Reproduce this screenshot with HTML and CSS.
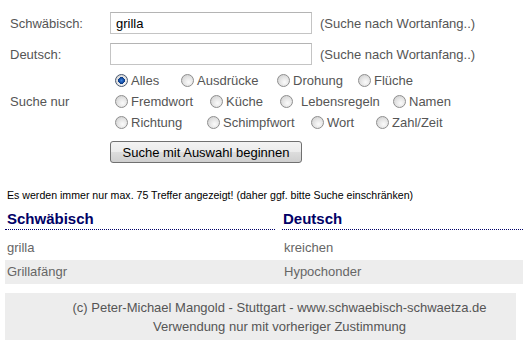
FILE: index.html
```html
<!DOCTYPE html>
<html lang="de">
<head>
<meta charset="utf-8">
<title>Schwäbisch-Wörterbuch</title>
<link rel="stylesheet" href="styles.css">
</head>
<body>
<div class="page">
  <form class="search">
    <label class="lbl row-s">Schwäbisch:</label>
    <div class="field row-s"><input class="txt" type="text" value="grilla"><span class="hint">(Suche nach Wortanfang..)</span></div>

    <label class="lbl row-d">Deutsch:</label>
    <div class="field row-d"><input class="txt" type="text" value=""><span class="hint">(Suche nach Wortanfang..)</span></div>

    <div class="lbl row-r">Suche nur</div>
    <div class="radios row-r">
      <div class="rrow r1">
        <label class="opt"><input class="rb" type="radio" name="k" checked><span>Alles</span></label>
        <label class="opt"><input class="rb" type="radio" name="k"><span>Ausdrücke</span></label>
        <label class="opt"><input class="rb" type="radio" name="k"><span>Drohung</span></label>
        <label class="opt"><input class="rb" type="radio" name="k"><span>Flüche</span></label>
      </div>
      <div class="rrow r2">
        <label class="opt"><input class="rb" type="radio" name="k"><span>Fremdwort</span></label>
        <label class="opt"><input class="rb" type="radio" name="k"><span>Küche</span></label>
        <label class="opt"><input class="rb" type="radio" name="k"><span class="sp">Lebensregeln</span></label>
        <label class="opt"><input class="rb" type="radio" name="k"><span>Namen</span></label>
      </div>
      <div class="rrow r3">
        <label class="opt"><input class="rb" type="radio" name="k"><span>Richtung</span></label>
        <label class="opt"><input class="rb" type="radio" name="k"><span>Schimpfwort</span></label>
        <label class="opt"><input class="rb" type="radio" name="k"><span>Wort</span></label>
        <label class="opt"><input class="rb" type="radio" name="k"><span>Zahl/Zeit</span></label>
      </div>
    </div>

    <div class="field row-b"><button class="btn" type="button">Suche mit Auswahl beginnen</button></div>
  </form>

  <p class="notice">Es werden immer nur max. 75 Treffer angezeigt! (daher ggf. bitte Suche einschränken)</p>

  <div class="results">
    <div class="th th-left">Schwäbisch</div>
    <div class="th">Deutsch</div>
    <div class="td">grilla</div>
    <div class="td">kreichen</div>
    <div class="td alt">Grillafängr</div>
    <div class="td alt">Hypochonder</div>
  </div>

  <div class="footer">
    <div>(c) Peter-Michael Mangold - Stuttgart - www.schwaebisch-schwaetza.de</div>
    <div>Verwendung nur mit vorheriger Zustimmung</div>
  </div>
</div>
</body>
</html>
```
FILE: styles.css
```css
html, body {
  margin: 0;
  padding: 0;
  background: #fff;
}
body {
  font-family: "Liberation Sans", Arial, sans-serif;
  font-size: 13px;
  color: #555;
}
.page {
  padding: 0 0 0 5px;
}

/* search form */
.search {
  display: grid;
  grid-template-columns: 100px auto;
  padding: 12px 0 0 5px;
  margin: 0;
}
.lbl {
  grid-column: 1;
  display: flex;
  align-items: center;
  color: #555;
}
.field {
  grid-column: 2;
  display: flex;
  align-items: center;
}
.row-s { height: 22px; }
.row-d { height: 22px; margin-top: 9px; }
.row-r { margin-top: 5px; }
.row-b { margin-top: 8px; }
.radios { grid-column: 2; padding-left: 5px; }

.txt {
  box-sizing: border-box;
  width: 202px;
  height: 22px;
  border: 1px solid #c4c4c4;
  border-top-color: #b4b4b4;
  padding: 0 5px;
  margin: 0;
  font-family: "Liberation Sans", Arial, sans-serif;
  font-size: 13px;
  color: #000;
  outline: none;
}
.hint {
  margin-left: 8px;
  color: #555;
}

.rrow {
  display: flex;
  height: 21px;
  align-items: center;
}
.opt {
  display: flex;
  align-items: center;
  color: #555;
}
.rb {
  appearance: none;
  -webkit-appearance: none;
  box-sizing: border-box;
  width: 13px;
  height: 13px;
  margin: 0 3px 0 0;
  border-radius: 50%;
  border: 1px solid #8e8e8e;
  background: radial-gradient(circle at 60% 65%, #fbfbfb 0, #e6e6e6 45%, #c9c9c9 100%);
  flex: none;
}
.rb:checked {
  border-color: #4a5a72;
  background:
    radial-gradient(circle at 50% 50%, #3f86e0 0, #1650a8 2.2px, #0c3a80 3.2px, transparent 3.6px),
    radial-gradient(circle at 60% 65%, #fbfbfb 0, #e6e6e6 45%, #c9c9c9 100%);
}
.sp { padding-left: 5px; }

.r1 .opt:nth-child(1) { width: 66px; }
.r1 .opt:nth-child(2) { width: 96px; }
.r1 .opt:nth-child(3) { width: 81px; }
.r2 .opt:nth-child(1) { width: 95px; }
.r2 .opt:nth-child(2) { width: 70px; }
.r2 .opt:nth-child(3) { width: 113px; }
.r3 .opt:nth-child(1) { width: 92px; }
.r3 .opt:nth-child(2) { width: 104px; }
.r3 .opt:nth-child(3) { width: 65px; }

.btn {
  box-sizing: border-box;
  width: 192px;
  height: 22px;
  margin: 0;
  padding: 0;
  border: 1px solid #707070;
  border-radius: 3px;
  background: linear-gradient(#f3f3f3 0, #ebebeb 50%, #dddddd 51%, #cfcfcf 100%);
  font-family: "Liberation Sans", Arial, sans-serif;
  font-size: 13px;
  color: #000;
}

/* notice */
.notice {
  margin: 26px 0 0 2px;
  font-size: 10.6px;
  line-height: 12px;
  color: #000;
}

/* results */
.results {
  display: grid;
  grid-template-columns: 277px 1fr;
}
.th {
  padding: 9px 0 1px 1px;
  line-height: 18px;
  font-size: 15px;
  font-weight: bold;
  color: #000066;
  border-bottom: 1px dotted #000066;
  margin-bottom: 6px;
}
.th-left { margin-right: 7px; padding-left: 2px; }
.td {
  height: 24px;
  line-height: 24px;
  padding-left: 2px;
  color: #666;
}
.td.alt { background: #ededed; }

/* footer */
.footer {
  margin: 9px 7px 0 0;
  padding: 5px 0 4px 38px;
  background: #ededed;
  line-height: 19px;
  text-align: center;
  color: #555;
}
```
